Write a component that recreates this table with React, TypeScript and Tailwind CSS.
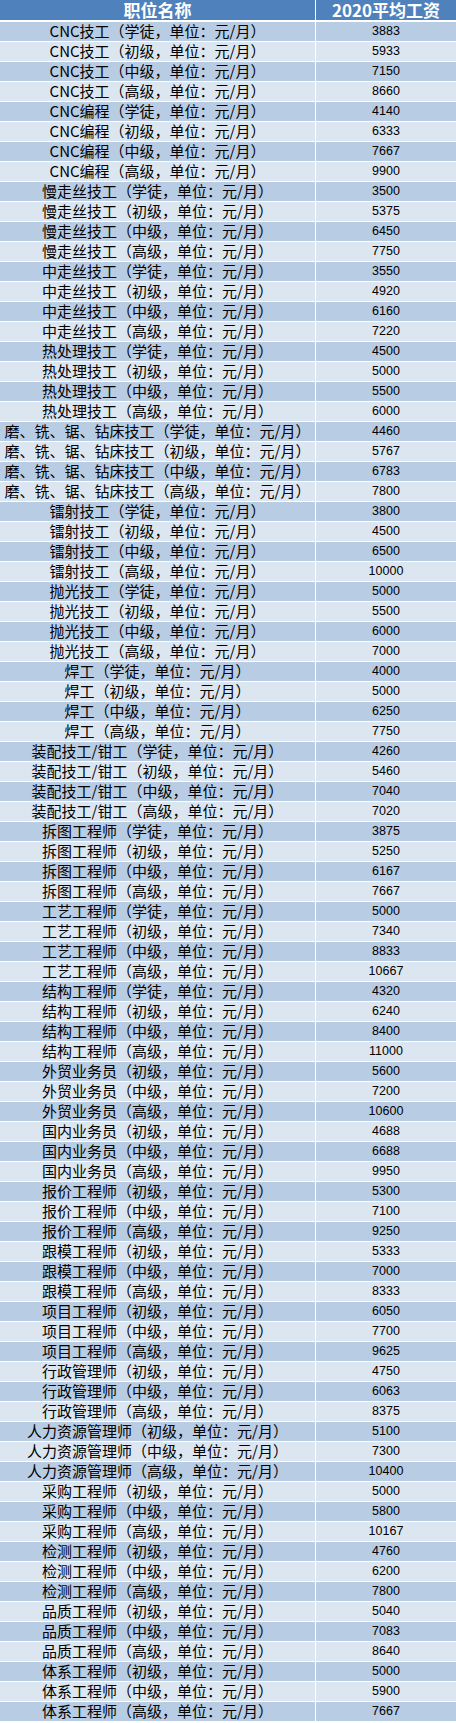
const rows: [string, number][] = [
  ["CNC技工（学徒，单位：元/月）", 3883],
  ["CNC技工（初级，单位：元/月）", 5933],
  ["CNC技工（中级，单位：元/月）", 7150],
  ["CNC技工（高级，单位：元/月）", 8660],
  ["CNC编程（学徒，单位：元/月）", 4140],
  ["CNC编程（初级，单位：元/月）", 6333],
  ["CNC编程（中级，单位：元/月）", 7667],
  ["CNC编程（高级，单位：元/月）", 9900],
  ["慢走丝技工（学徒，单位：元/月）", 3500],
  ["慢走丝技工（初级，单位：元/月）", 5375],
  ["慢走丝技工（中级，单位：元/月）", 6450],
  ["慢走丝技工（高级，单位：元/月）", 7750],
  ["中走丝技工（学徒，单位：元/月）", 3550],
  ["中走丝技工（初级，单位：元/月）", 4920],
  ["中走丝技工（中级，单位：元/月）", 6160],
  ["中走丝技工（高级，单位：元/月）", 7220],
  ["热处理技工（学徒，单位：元/月）", 4500],
  ["热处理技工（初级，单位：元/月）", 5000],
  ["热处理技工（中级，单位：元/月）", 5500],
  ["热处理技工（高级，单位：元/月）", 6000],
  ["磨、铣、锯、钻床技工（学徒，单位：元/月）", 4460],
  ["磨、铣、锯、钻床技工（初级，单位：元/月）", 5767],
  ["磨、铣、锯、钻床技工（中级，单位：元/月）", 6783],
  ["磨、铣、锯、钻床技工（高级，单位：元/月）", 7800],
  ["镭射技工（学徒，单位：元/月）", 3800],
  ["镭射技工（初级，单位：元/月）", 4500],
  ["镭射技工（中级，单位：元/月）", 6500],
  ["镭射技工（高级，单位：元/月）", 10000],
  ["抛光技工（学徒，单位：元/月）", 5000],
  ["抛光技工（初级，单位：元/月）", 5500],
  ["抛光技工（中级，单位：元/月）", 6000],
  ["抛光技工（高级，单位：元/月）", 7000],
  ["焊工（学徒，单位：元/月）", 4000],
  ["焊工（初级，单位：元/月）", 5000],
  ["焊工（中级，单位：元/月）", 6250],
  ["焊工（高级，单位：元/月）", 7750],
  ["装配技工/钳工（学徒，单位：元/月）", 4260],
  ["装配技工/钳工（初级，单位：元/月）", 5460],
  ["装配技工/钳工（中级，单位：元/月）", 7040],
  ["装配技工/钳工（高级，单位：元/月）", 7020],
  ["拆图工程师（学徒，单位：元/月）", 3875],
  ["拆图工程师（初级，单位：元/月）", 5250],
  ["拆图工程师（中级，单位：元/月）", 6167],
  ["拆图工程师（高级，单位：元/月）", 7667],
  ["工艺工程师（学徒，单位：元/月）", 5000],
  ["工艺工程师（初级，单位：元/月）", 7340],
  ["工艺工程师（中级，单位：元/月）", 8833],
  ["工艺工程师（高级，单位：元/月）", 10667],
  ["结构工程师（学徒，单位：元/月）", 4320],
  ["结构工程师（初级，单位：元/月）", 6240],
  ["结构工程师（中级，单位：元/月）", 8400],
  ["结构工程师（高级，单位：元/月）", 11000],
  ["外贸业务员（初级，单位：元/月）", 5600],
  ["外贸业务员（中级，单位：元/月）", 7200],
  ["外贸业务员（高级，单位：元/月）", 10600],
  ["国内业务员（初级，单位：元/月）", 4688],
  ["国内业务员（中级，单位：元/月）", 6688],
  ["国内业务员（高级，单位：元/月）", 9950],
  ["报价工程师（初级，单位：元/月）", 5300],
  ["报价工程师（中级，单位：元/月）", 7100],
  ["报价工程师（高级，单位：元/月）", 9250],
  ["跟模工程师（初级，单位：元/月）", 5333],
  ["跟模工程师（中级，单位：元/月）", 7000],
  ["跟模工程师（高级，单位：元/月）", 8333],
  ["项目工程师（初级，单位：元/月）", 6050],
  ["项目工程师（中级，单位：元/月）", 7700],
  ["项目工程师（高级，单位：元/月）", 9625],
  ["行政管理师（初级，单位：元/月）", 4750],
  ["行政管理师（中级，单位：元/月）", 6063],
  ["行政管理师（高级，单位：元/月）", 8375],
  ["人力资源管理师（初级，单位：元/月）", 5100],
  ["人力资源管理师（中级，单位：元/月）", 7300],
  ["人力资源管理师（高级，单位：元/月）", 10400],
  ["采购工程师（初级，单位：元/月）", 5000],
  ["采购工程师（中级，单位：元/月）", 5800],
  ["采购工程师（高级，单位：元/月）", 10167],
  ["检测工程师（初级，单位：元/月）", 4760],
  ["检测工程师（中级，单位：元/月）", 6200],
  ["检测工程师（高级，单位：元/月）", 7800],
  ["品质工程师（初级，单位：元/月）", 5040],
  ["品质工程师（中级，单位：元/月）", 7083],
  ["品质工程师（高级，单位：元/月）", 8640],
  ["体系工程师（初级，单位：元/月）", 5000],
  ["体系工程师（中级，单位：元/月）", 5900],
  ["体系工程师（高级，单位：元/月）", 7667],
];

function App() {
  return (
    <div className="w-[456px] h-[1723px] bg-white font-['Noto_Sans_CJK_SC',sans-serif] text-black">
      {/* Header */}
      <div className="grid grid-cols-[315px_1fr] gap-x-px h-[20px] mb-[2px]">
        <div className="bg-[#4f81bd] text-white font-bold text-[17px] leading-[20px] text-center">
          职位名称
        </div>
        <div className="bg-[#4f81bd] text-white font-bold text-[17px] leading-[20px] text-center">
          2020平均工资
        </div>
      </div>

      {/* Rows */}
      <div className="flex flex-col gap-px">
        {rows.map(([name, pay], i) => (
          <div
            key={name}
            className={`grid grid-cols-[315px_1fr] gap-x-px h-[19px] ${i % 2 === 0 ? "[&>div]:bg-[#b8cce4]" : "[&>div]:bg-[#dce6f1]"}`}
          >
            <div className="text-[15px] leading-[17px] text-center whitespace-nowrap">{name}</div>
            <div className="text-[12.5px] leading-[19px] text-center font-['Liberation_Sans',sans-serif]">{pay}</div>
          </div>
        ))}
      </div>
    </div>
  );
}

export default App;
